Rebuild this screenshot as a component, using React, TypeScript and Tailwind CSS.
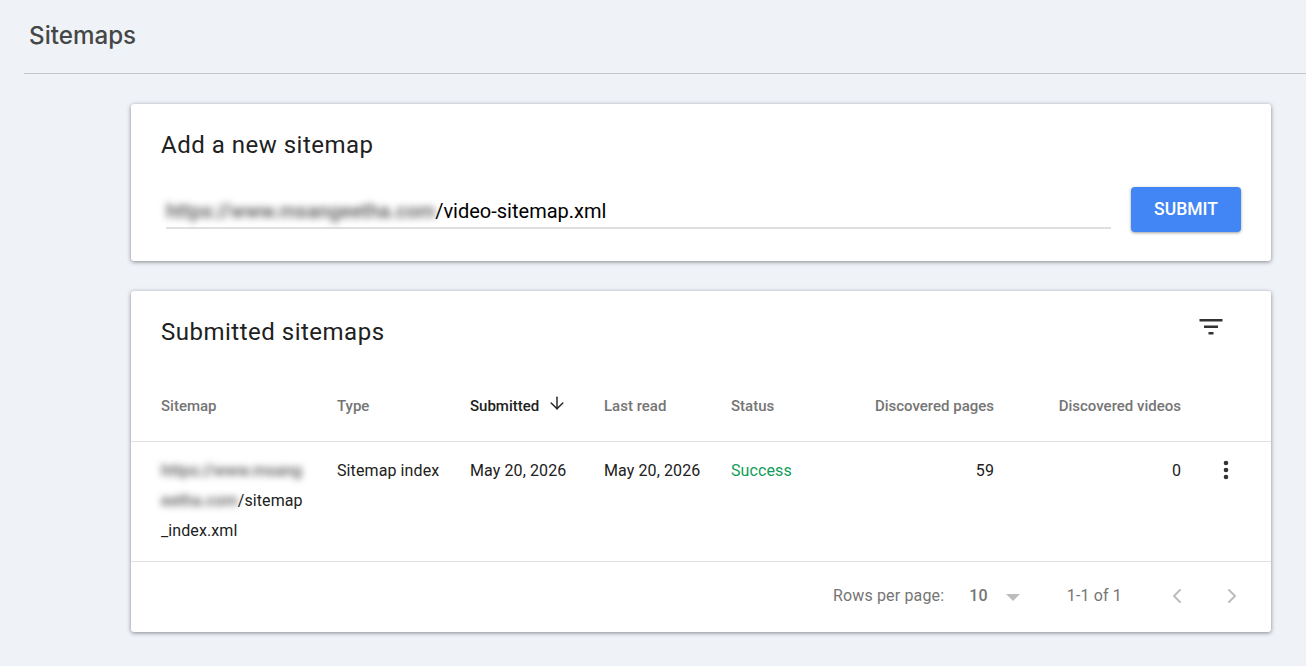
import { ArrowDown, ChevronLeft, ChevronRight } from 'lucide-react';

const headCell = 'text-[15px] font-medium text-[#757575] leading-5';
const bodyCell = 'text-[16px] tracking-[0.1px] text-[#212121] leading-[30px]';
const blurred = 'blur-[3.5px] font-medium text-[#555555]';
const cardShadow = 'shadow-[0_1px_4px_rgba(60,64,67,0.6)]';

function FilterIcon() {
  return (
    <svg width="24" height="24" viewBox="0 0 24 24" fill="#333333">
      <path d="M0.5 3h23v2.4H0.5zM5 9.5h14v2.4H5zM9.5 16h5v2.4h-5z" />
    </svg>
  );
}

function KebabIcon() {
  return (
    <svg width="6" height="20" viewBox="0 0 6 20" fill="#333333">
      <circle cx="3" cy="3" r="2.3" />
      <circle cx="3" cy="10" r="2.3" />
      <circle cx="3" cy="17" r="2.3" />
    </svg>
  );
}

export default function App() {
  return (
    <div className="min-h-[666px] overflow-hidden bg-[#eff3f8] font-['Roboto',sans-serif]">
      <div className="ml-6 h-[74px] border-b border-[#c4c7c9] pl-[5px] pt-[18px]">
        <h1 className="font-['Inter',sans-serif] text-[24.2px] font-medium leading-[35px] text-[#444746]">Sitemaps</h1>
      </div>

      <div className="ml-[131px] mr-[35px] mt-[30px] flex flex-col gap-[30px]">
        <section className={`h-[157px] rounded-[3px] bg-white pl-[30px] pr-[30px] pt-[25px] ${cardShadow}`}>
          <h2 className="text-[24px] leading-[33px] tracking-[0.5px] text-[#212121]">Add a new sitemap</h2>
          <div className="mt-[25px] flex items-start justify-between">
            <div className="ml-[5px] flex h-[42px] w-[945px] items-center border-b-2 border-[#e0e0e0] pt-[8px] text-[20px] text-black">
              <span className={blurred}>https://www.msangeetha.com</span>
              <span>/video-sitemap.xml</span>
            </div>
            <button className="h-[45px] w-[110px] rounded-[4px] bg-[#4285f4] text-[17.5px] font-medium text-white shadow-[0_1px_3px_rgba(60,64,67,0.5)]">
              SUBMIT
            </button>
          </div>
        </section>

        <section className={`h-[341px] rounded-[3px] bg-white ${cardShadow}`}>
          <div className="flex h-[80px] items-start justify-between pl-[30px] pr-[48px] pt-[25px]">
            <h2 className="text-[24px] leading-[33px] tracking-[0.5px] text-[#212121]">Submitted sitemaps</h2>
            <FilterIcon />
          </div>

          <div className="grid h-[71px] grid-cols-[206px_133px_134px_127px_135px_128px_187px_1fr] items-center border-b border-[#e0e0e0] pb-[1px]">
            <div className={`${headCell} pl-[30px]`}>Sitemap</div>
            <div className={headCell}>Type</div>
            <div className="flex items-center gap-[8px] text-[15px] font-medium leading-5 text-[#212121]">
              Submitted
              <ArrowDown size={20} strokeWidth={1.7} className="mt-[-5px]" />
            </div>
            <div className={headCell}>Last read</div>
            <div className={headCell}>Status</div>
            <div className={`${headCell} whitespace-nowrap text-right`}>Discovered pages</div>
            <div className={`${headCell} text-right`}>Discovered videos</div>
            <div />
          </div>

          <div className="grid h-[120px] grid-cols-[206px_133px_134px_127px_135px_128px_187px_1fr] items-start border-b border-[#e0e0e0] pt-[14px]">
            <div className={`${bodyCell} pl-[30px]`}>
              <div className={blurred}>https://www.msang</div>
              <div>
                <span className={`${blurred} inline-block`}>eetha.com</span>/sitemap
              </div>
              <div>_index.xml</div>
            </div>
            <div className={bodyCell}>Sitemap index</div>
            <div className={bodyCell}>May 20, 2026</div>
            <div className={bodyCell}>May 20, 2026</div>
            <div className="text-[16px] leading-[30px] tracking-[0.1px] text-[#0f9d58]">Success</div>
            <div className={`${bodyCell} text-right`}>59</div>
            <div className={`${bodyCell} text-right`}>0</div>
            <div className="flex justify-end pr-[42px] pt-[4px]">
              <KebabIcon />
            </div>
          </div>

          <div className="flex h-[69px] items-center pb-[2px] pl-[702px] text-[16px] tracking-[0.15px] text-[#757575]">
            <span>Rows per page:</span>
            <span className="ml-[25px] font-medium">10</span>
            <span className="ml-[18px] mt-[3px] h-0 w-0 border-x-[7px] border-t-[7px] border-x-transparent border-t-[#bdbdbd]" />
            <span className="ml-[47px]">1-1 of 1</span>
            <ChevronLeft size={24} strokeWidth={2} className="ml-[43px] text-[#bdbdbd]" />
            <ChevronRight size={24} strokeWidth={2} className="ml-[31px] text-[#bdbdbd]" />
          </div>
        </section>
      </div>
    </div>
  );
}
